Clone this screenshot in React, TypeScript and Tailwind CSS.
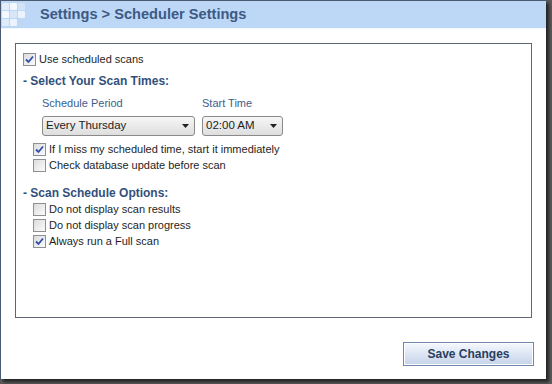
import type { ReactNode } from 'react';

const font = { fontFamily: '"Liberation Sans", Arial, sans-serif' };

function Check({ checked, label }: { checked?: boolean; label: string }) {
  return (
    <label className="flex h-4 items-center gap-[3px] text-[11px] text-[#1e1e1e]">
      <span className="flex h-[13px] w-[13px] items-center justify-center border border-[#8c8f94] bg-gradient-to-br from-[#dcdcdc] to-[#fbfbfb]">
        {checked && (
          <svg width="9" height="9" viewBox="0 0 9 9">
            <path d="M1 4.5 L3.5 7 L8 1.5" fill="none" stroke="#2f4fa8" strokeWidth="1.8" />
          </svg>
        )}
      </span>
      {label}
    </label>
  );
}

function Select({ value, className }: { value: string; className: string }) {
  return (
    <div
      className={`flex h-5 items-center justify-between rounded-[3px] border border-[#8a8a8a] bg-gradient-to-b from-[#f6f6f6] to-[#dedede] pl-[3px] pr-[5px] text-[11.5px] text-[#1e1e1e] ${className}`}
    >
      <span>{value}</span>
      <svg width="7" height="4" viewBox="0 0 7 4">
        <path d="M0 0 H7 L3.5 4 Z" fill="#202020" />
      </svg>
    </div>
  );
}

function Heading({ children }: { children: ReactNode }) {
  return <div className="text-[12px] font-bold text-[#33507d]">- {children}</div>;
}

function Logo() {
  const cells = [
    [0, 0, '#e4eefb'],
    [8, 0, '#f4f8fe'],
    [0, 8, '#f4f8fe'],
    [8, 8, '#d7e6f9'],
    [16, 8, '#edf3fd'],
    [8, 16, '#edf3fd'],
    [0, 16, '#e0ebfa'],
    [16, 0, '#d2e2f7'],
  ] as const;
  return (
    <svg width="26" height="27" viewBox="0 0 26 27" className="shrink-0">
      {cells.map(([x, y, c], i) => (
        <rect key={i} x={x + 1} y={y + 2} width="7" height="7" rx="1" fill={c} />
      ))}
    </svg>
  );
}

export default function App() {
  return (
    <div className="h-[384px] w-[552px] bg-[#5b5b5b]" style={font}>
      <div className="flex h-[379px] w-[546px] flex-col border-l border-t border-[#4a5a72] bg-white shadow-[3px_3px_3px_rgba(0,0,0,0.6)]">
        <div className="flex h-[27px] items-center bg-[#bdd7f7]">
          <Logo />
          <h1 className="ml-[13px] text-[14.6px] font-bold text-[#3c5a84]">Settings &gt; Scheduler Settings</h1>
        </div>
        <div className="h-px bg-[#f3f8fe]" />
        <div className="ml-[14px] mt-[14px] h-[275px] w-[517px] border border-[#5d6672] px-[7px] pt-[7px]">
          <Check checked label="Use scheduled scans" />
          <div className="mt-[5px]">
            <Heading>Select Your Scan Times:</Heading>
          </div>
          <div className="ml-[19px] mt-[5px] flex gap-[7px]">
            <div className="flex flex-col gap-[4px]">
              <span className="text-[11px] text-[#3c5d8c]">Schedule Period</span>
              <Select value="Every Thursday" className="w-[153px]" />
            </div>
            <div className="flex flex-col gap-[4px]">
              <span className="text-[11px] text-[#3c5d8c]">Start Time</span>
              <Select value="02:00 AM" className="w-[81px]" />
            </div>
          </div>
          <div className="ml-[10px] mt-[6px] flex flex-col">
            <Check checked label="If I miss my scheduled time, start it immediately" />
            <Check label="Check database update before scan" />
          </div>
          <div className="mt-[10px]">
            <Heading>Scan Schedule Options:</Heading>
          </div>
          <div className="ml-[10px] flex flex-col">
            <Check label="Do not display scan results" />
            <Check label="Do not display scan progress" />
            <Check checked label="Always run a Full scan" />
          </div>
        </div>
        <div className="mr-[12px] mt-[24px] flex justify-end">
          <button className="h-[24px] w-[131px] border border-[#7087ab] bg-gradient-to-b from-[#f5f8fd] to-[#c5d3ea] text-[12px] font-bold text-[#2a3e5e] shadow-[inset_0_0_0_1px_#ffffff]">
            Save Changes
          </button>
        </div>
      </div>
    </div>
  );
}
